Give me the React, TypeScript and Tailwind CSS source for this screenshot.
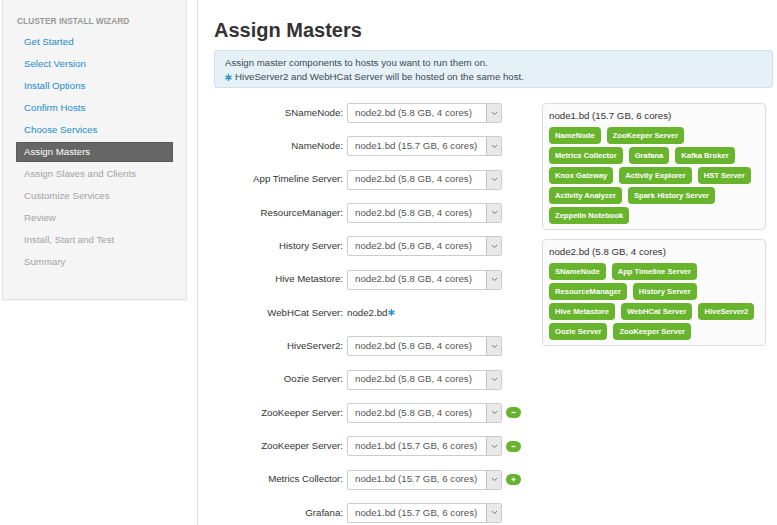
import React from "react";

type Row = { label: string; value?: string; staticVal?: string; btn?: "minus" | "plus" };

const rows: Row[] = [
  { label: "SNameNode", value: "node2.bd (5.8 GB, 4 cores)" },
  { label: "NameNode", value: "node1.bd (15.7 GB, 6 cores)" },
  { label: "App Timeline Server", value: "node2.bd (5.8 GB, 4 cores)" },
  { label: "ResourceManager", value: "node2.bd (5.8 GB, 4 cores)" },
  { label: "History Server", value: "node2.bd (5.8 GB, 4 cores)" },
  { label: "Hive Metastore", value: "node2.bd (5.8 GB, 4 cores)" },
  { label: "WebHCat Server", staticVal: "node2.bd" },
  { label: "HiveServer2", value: "node2.bd (5.8 GB, 4 cores)" },
  { label: "Oozie Server", value: "node2.bd (5.8 GB, 4 cores)" },
  { label: "ZooKeeper Server", value: "node2.bd (5.8 GB, 4 cores)", btn: "minus" },
  { label: "ZooKeeper Server", value: "node1.bd (15.7 GB, 6 cores)", btn: "minus" },
  { label: "Metrics Collector", value: "node1.bd (15.7 GB, 6 cores)", btn: "plus" },
  { label: "Grafana", value: "node1.bd (15.7 GB, 6 cores)" },
];

const steps = [
  { name: "Get Started", state: "done" },
  { name: "Select Version", state: "done" },
  { name: "Install Options", state: "done" },
  { name: "Confirm Hosts", state: "done" },
  { name: "Choose Services", state: "done" },
  { name: "Assign Masters", state: "active" },
  { name: "Assign Slaves and Clients", state: "todo" },
  { name: "Customize Services", state: "todo" },
  { name: "Review", state: "todo" },
  { name: "Install, Start and Test", state: "todo" },
  { name: "Summary", state: "todo" },
];

const hosts = [
  {
    title: "node1.bd (15.7 GB, 6 cores)",
    rows: [
      ["NameNode", "ZooKeeper Server"],
      ["Metrics Collector", "Grafana", "Kafka Broker"],
      ["Knox Gateway", "Activity Explorer", "HST Server"],
      ["Activity Analyzer", "Spark History Server"],
      ["Zeppelin Notebook"],
    ],
  },
  {
    title: "node2.bd (5.8 GB, 4 cores)",
    rows: [
      ["SNameNode", "App Timeline Server"],
      ["ResourceManager", "History Server"],
      ["Hive Metastore", "WebHCat Server", "HiveServer2"],
      ["Oozie Server", "ZooKeeper Server"],
    ],
  },
];

function Asterisk({ size = 7 }: { size?: number }) {
  return (
    <svg width={size} height={size} viewBox="0 0 10 10" className="inline-block">
      <g stroke="#2a93c9" strokeWidth="2" strokeLinecap="round">
        <line x1="5" y1="0.8" x2="5" y2="9.2" />
        <line x1="1.4" y1="2.9" x2="8.6" y2="7.1" />
        <line x1="1.4" y1="7.1" x2="8.6" y2="2.9" />
      </g>
    </svg>
  );
}

function Select({ value }: { value: string }) {
  return (
    <div className="flex h-[20px] w-[155px] items-stretch rounded-[2px] border border-[#cccccc] bg-white">
      <div className="flex flex-1 items-center pl-[7px] text-[9.7px] text-[#555]">{value}</div>
      <div className="flex w-[15px] items-center justify-center border-l border-[#c4c4c4] bg-[#e8e8e8]">
        <svg width="7" height="5" viewBox="0 0 7 5">
          <polyline points="1,1 3.5,3.6 6,1" fill="none" stroke="#777" strokeWidth="1" />
        </svg>
      </div>
    </div>
  );
}

function PillBtn({ kind }: { kind: "minus" | "plus" }) {
  return (
    <div className="ml-[4px] flex h-[11px] w-[15px] items-center justify-center rounded-full bg-[#67b32e]">
      <svg width="5" height="5" viewBox="0 0 5 5">
        <line x1="0.5" y1="2.5" x2="4.5" y2="2.5" stroke="white" strokeWidth="1.3" />
        {kind === "plus" && <line x1="2.5" y1="0.5" x2="2.5" y2="4.5" stroke="white" strokeWidth="1.3" />}
      </svg>
    </div>
  );
}

export default function App() {
  return (
    <div className="flex h-[525px] w-[777px] overflow-hidden bg-white font-['Liberation_Sans',Arial,sans-serif] text-[#333]">
      {/* Sidebar */}
      <div className="w-[197px] shrink-0 pl-[2px]">
        <div className="w-[185px] border-x border-b border-[#e3e3e3] bg-[#f5f5f5] pb-[25px] pl-[13px] pr-[13px] pt-[15px] shadow-[0_1px_1px_rgba(0,0,0,0.04)]">
          <div className="h-[12px] pl-[1px] text-[8.4px] font-bold uppercase leading-[12px] text-[#999]">
            Cluster Install Wizard
          </div>
          <div className="mt-[5px] flex flex-col">
            {steps.map((s) => (
              <div
                key={s.name}
                className={
                  s.state === "active"
                    ? "mb-[2px] flex h-[20px] items-center border border-[#5a5a5a] bg-[#666] pl-[7px] text-[9.7px] text-white"
                    : s.state === "done"
                    ? "mb-[2px] flex h-[20px] items-center pl-[8px] text-[9.7px] text-[#1b8ccd]"
                    : "mb-[2px] flex h-[20px] items-center pl-[8px] text-[9.7px] text-[#a3a3a3]"
                }
              >
                {s.name}
              </div>
            ))}
          </div>
        </div>
      </div>

      {/* Main */}
      <div className="flex-1 border-l border-[#e2e2e2] pl-[16px] pt-[18px]">
        <h1 className="h-[24px] text-[20px] font-bold leading-[24px] text-[#333]">Assign Masters</h1>
        <div className="mt-[8px] h-[38px] w-[559px] rounded-[3px] border border-[#cde0ea] bg-[#e6f1f7] pl-[10px] pt-[5px] text-[9.7px] leading-[14px] text-[#3b4a53]">
          <div>Assign master components to hosts you want to run them on.</div>
          <div className="flex items-center gap-[3px]">
            <Asterisk />
            <span>HiveServer2 and WebHCat Server will be hosted on the same host.</span>
          </div>
        </div>

        <div className="mt-[15px] flex">
          {/* Form */}
          <div className="flex w-[328px] flex-col gap-[13.33px]">
            {rows.map((r, i) => (
              <div key={i} className="flex h-[20px] items-center">
                <div className="w-[129px] text-right text-[9.7px] text-[#333]">{r.label}:</div>
                <div className="ml-[4px] flex items-center">
                  {r.value ? (
                    <Select value={r.value} />
                  ) : (
                    <span className="flex items-center gap-[1px] text-[9.7px] text-[#333]">
                      {r.staticVal}
                      <Asterisk />
                    </span>
                  )}
                  {r.btn && <PillBtn kind={r.btn} />}
                </div>
              </div>
            ))}
          </div>

          {/* Hosts */}
          <div className="flex w-[224px] flex-col gap-[9px]">
            {hosts.map((h) => (
              <div
                key={h.title}
                className="rounded-[4px] border border-[#dcdcdc] bg-[#fbfbfb] pb-[5px] pl-[6px] pr-[4px] pt-[5px]"
              >
                <div className="h-[13px] text-[9.7px] leading-[13px] text-[#333]">{h.title}</div>
                <div className="mt-[5px] flex flex-col gap-[3px]">
                  {h.rows.map((row, ri) => (
                    <div key={ri} className="flex gap-[6px]">
                      {row.map((b) => (
                        <span
                          key={b}
                          className="flex h-[17px] items-center whitespace-nowrap rounded-[4px] bg-[#68b42c] px-[6px] text-[7.6px] font-bold text-white"
                        >
                          {b}
                        </span>
                      ))}
                    </div>
                  ))}
                </div>
              </div>
            ))}
          </div>
        </div>
      </div>
    </div>
  );
}
